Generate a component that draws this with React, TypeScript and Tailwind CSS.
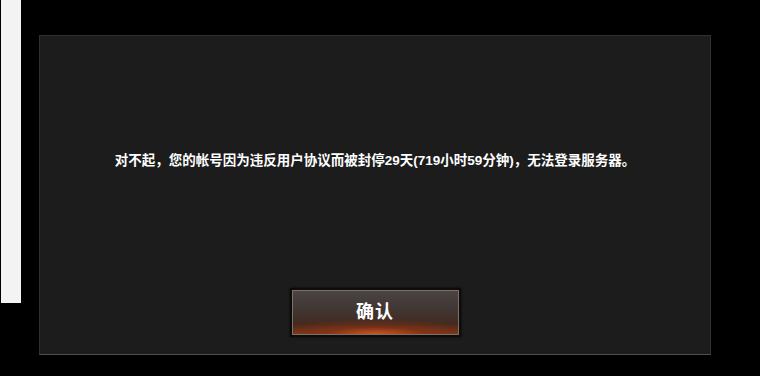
export default function App() {
  return (
    <div className="w-[760px] h-[376px] bg-black flex items-start overflow-hidden font-['Liberation_Sans','Noto_Sans_CJK_SC',sans-serif]">
      {/* 左侧白条 */}
      <div className="w-[20px] h-[303px] ml-[1px] bg-[#f3f3f3] shrink-0"></div>

      {/* 主面板 */}
      <div className="ml-[18px] mt-[35px] w-[672px] h-[320px] bg-[#1c1c1d] border border-[#2f2f30] border-b-[#505051] flex flex-col items-center">
        <p className="mt-[115px] text-white text-[13.5px] font-bold leading-[20px]">
          对不起，您的帐号因为违反用户协议而被封停29天(719小时59分钟)，无法登录服务器。
        </p>

        <button className="mt-[117px] w-[171px] h-[49px] bg-[#0e0c0b] p-[2px] shadow-[0_0_2px_rgba(0,0,0,0.8)]">
          <div className="w-full h-full border border-[#78716e] bg-[radial-gradient(ellipse_65%_35%_at_50%_100%,rgba(220,90,30,0.85)_0%,rgba(150,55,20,0.5)_45%,rgba(0,0,0,0)_100%),linear-gradient(to_bottom,#4a4442_0%,#403633_45%,#44291e_78%,#7a3316_100%)] flex items-center justify-center">
            <span className="text-white text-[18px] font-bold tracking-[1px]">确认</span>
          </div>
        </button>
      </div>
    </div>
  );
}
